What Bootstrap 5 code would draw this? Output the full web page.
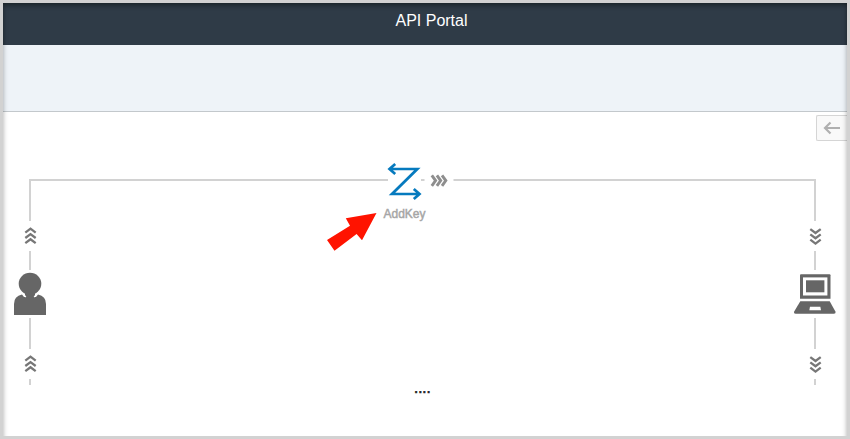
<!DOCTYPE html>
<html lang="en">
<head>
<meta charset="utf-8">
<meta name="viewport" content="width=device-width, initial-scale=1">
<title>API Portal</title>
<link href="https://cdn.jsdelivr.net/npm/bootstrap@5.3.0/dist/css/bootstrap.min.css" rel="stylesheet">
<style>
body{font-family:"Liberation Sans",Arial,sans-serif;background:#d2d2d2}
.portal-frame{border:3px solid #d2d2d2}
.portal-frame::after{content:"";position:absolute;inset:0 0 -8px;pointer-events:none;box-shadow:inset 0 0 5px rgba(0,0,0,.35)}
.portal-header{height:42px;background:#2f3b47;color:#fff;font-size:16px;line-height:36px;padding-left:13px;box-shadow:inset 0 5px 4px -2px #232f36}
.portal-toolbar{height:67px;background:#eef3f8;border-bottom:1px solid #c3c8cc}
.back-btn{top:3px;right:0;width:31px;height:26px;background:#f9f9f9;border:1px solid #d5d5d5;border-right:0;border-radius:2px 0 0 2px}
.policy-label{top:94px;left:380.5px;font-size:12px;line-height:16px;color:#a6a6a6;-webkit-text-stroke:.45px #a6a6a6}
.more-dots{top:267px;left:411px;font-size:15px;line-height:18px;color:#222;-webkit-text-stroke:.6px #222}
</style>
</head>
<body class="vh-100 overflow-hidden">
<div class="portal-frame vh-100 bg-white d-flex flex-column position-relative overflow-hidden">
  <header class="portal-header text-center flex-shrink-0">API Portal</header>
  <div class="portal-toolbar flex-shrink-0"></div>
  <main class="flex-grow-1 position-relative">
    <svg class="d-block" width="844" height="324" viewBox="3 112 844 324" fill="none">
      <defs>
        <path id="chevrons" d="M-5.2 -3.4L0 -7.3L5.2 -3.4M-5.2 2L0 -1.9L5.2 2M-5.2 7.2L0 3.3L5.2 7.2" stroke="#777" stroke-width="2.3"/>
      </defs>
      <path d="M388 180H30V221M30 251V270M30 318V349M30 379V385M421 180H424.5M453.5 180H815V221M815 251V270M815 318V349M815 379V385" stroke="#d2d2d2" stroke-width="2"/>
      <use href="#chevrons" x="30.5" y="236"/>
      <use href="#chevrons" x="30.5" y="364"/>
      <use href="#chevrons" transform="translate(815.5 236.3) rotate(180)"/>
      <use href="#chevrons" transform="translate(815.5 364.3) rotate(180)"/>
      <path d="M431.8 175.3L435.6 180.6L431.8 185.9M436.9 175.3L440.7 180.6L436.9 185.9M442 175.3L445.8 180.6L442 185.9" stroke="#8e8e8e" stroke-width="2.9"/>
      <!-- user -->
      <g fill="#666">
        <ellipse cx="30" cy="283.7" rx="11.3" ry="11"/>
        <path d="M14 315V304Q14 296 22 294.5L24 297H36L38 294.5Q46 296 46 304V315Z"/>
        <path d="M25 292H35V298H25Z"/>
      </g>
      <path d="M23.3 294.2L25.8 297M36.7 294.2L34.2 297" stroke="#fff" stroke-width="1.4"/>
      <!-- laptop -->
      <path d="M801 274.2H829.5Q830.5 274.2 830.5 275.2V298.8H800V275.2Q800 274.2 801 274.2Z" fill="#666"/>
      <path d="M803 277.4H827.4V295.5H803Z" fill="#fff"/>
      <path d="M806 280.3H824.4V292.3H806Z" fill="#666"/>
      <path d="M800.3 301.3H829.7L835.4 311.5Q836 313.7 833.8 313.7H795.7Q793.5 313.7 794.2 311.5Z" fill="#666"/>
      <path d="M810 306.8H820.3L821 310.2H809.3Z" fill="#fff"/>
      <!-- policy -->
      <path d="M395.2 164L389.5 169L395.2 174M390 169H417.3L392 194H419.5M413.8 189L419.5 194L413.8 199" stroke="#067abe" stroke-width="2.7"/>
      <path d="M376.5 213L362 240.3L356.6 234L334.5 250.8L327 240L350 225.7L345.8 218.3Z" fill="#ff1300"/>
    </svg>
    <div class="policy-label position-absolute">AddKey</div>
    <div class="more-dots position-absolute">....</div>
    <button class="back-btn btn position-absolute p-0 d-flex align-items-center" type="button" aria-label="Back">
      <svg width="30" height="24" viewBox="0 0 30 24" fill="none"><path d="M13.5 6.5L8 12L13.5 17.5M8 12H23" stroke="#b0b0b0" stroke-width="2.2"/></svg>
    </button>
  </main>
</div>
<script src="https://cdn.jsdelivr.net/npm/bootstrap@5.3.0/dist/js/bootstrap.bundle.min.js"></script>
</body>
</html>
